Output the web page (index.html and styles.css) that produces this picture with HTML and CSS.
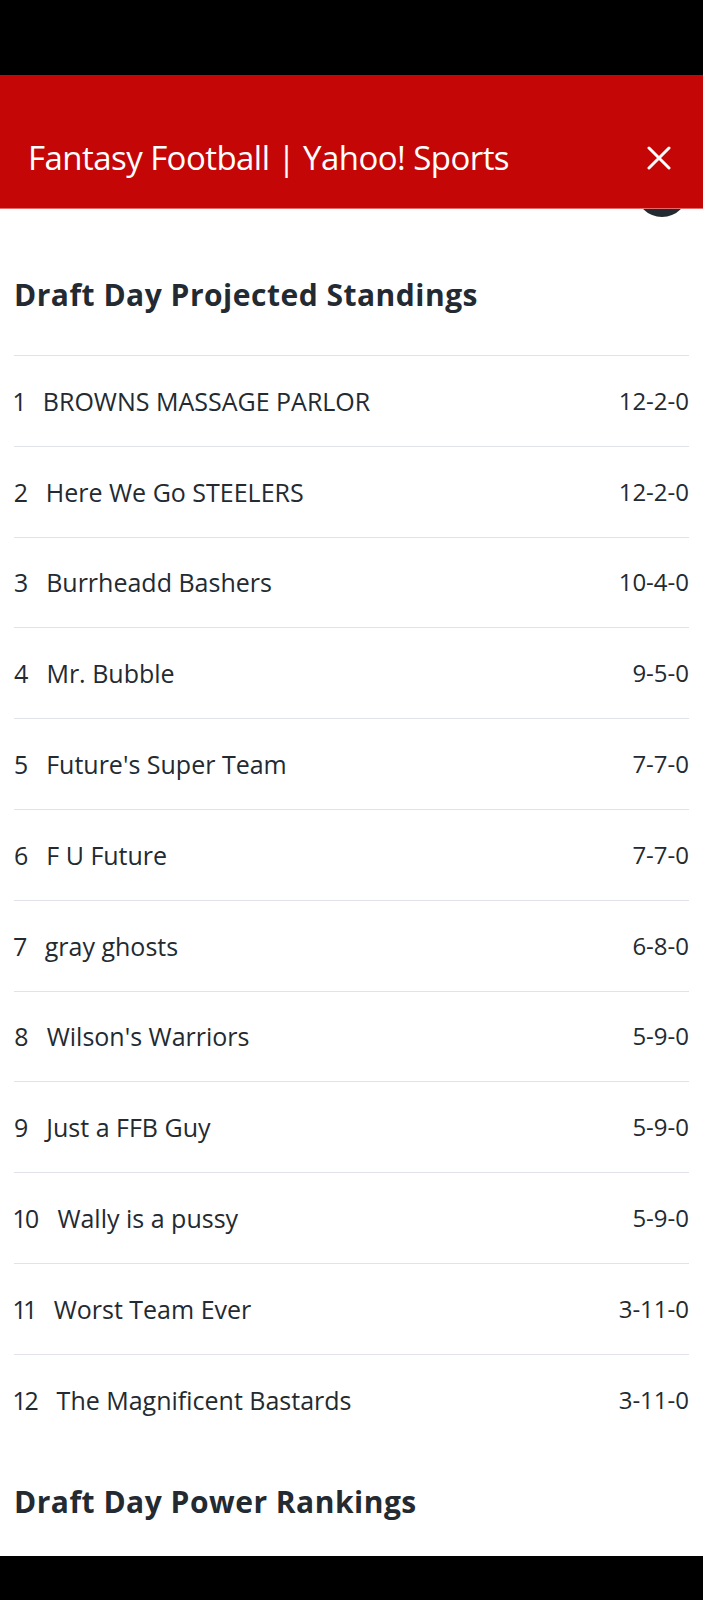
FILE: index.html
```html
<!DOCTYPE html>
<html lang="en">
<head>
<meta charset="utf-8">
<title>Fantasy Football | Yahoo! Sports</title>
<link rel="stylesheet" href="styles.css">
</head>
<body>
<div class="screen">
  <div class="status-bar"></div>
  <header class="app-header">
    <h1 class="app-title">Fantasy Football | Yahoo! Sports</h1>
    <button class="close-btn" aria-label="Close">
      <svg viewBox="0 0 24 24" width="24" height="24"><path d="M2 2 L22 22 M22 2 L2 22" stroke="#fff" stroke-width="3" stroke-linecap="round" fill="none"/></svg>
    </button>
  </header>
  <main class="content">
    <div class="fab"></div>
    <section class="section">
      <h2 class="section-title first">Draft Day Projected Standings</h2>
      <ul class="standings">
        <li class="row"><span class="team"><span class="rank">1</span>BROWNS MASSAGE PARLOR</span><span class="record">12-2-0</span></li>
        <li class="row"><span class="team"><span class="rank">2</span>Here We Go STEELERS</span><span class="record">12-2-0</span></li>
        <li class="row"><span class="team"><span class="rank">3</span>Burrheadd Bashers</span><span class="record">10-4-0</span></li>
        <li class="row"><span class="team"><span class="rank">4</span>Mr. Bubble</span><span class="record">9-5-0</span></li>
        <li class="row"><span class="team"><span class="rank">5</span>Future's Super Team</span><span class="record">7-7-0</span></li>
        <li class="row"><span class="team"><span class="rank">6</span>F U Future</span><span class="record">7-7-0</span></li>
        <li class="row"><span class="team"><span class="rank">7</span>gray ghosts</span><span class="record">6-8-0</span></li>
        <li class="row"><span class="team"><span class="rank">8</span>Wilson's Warriors</span><span class="record">5-9-0</span></li>
        <li class="row"><span class="team"><span class="rank">9</span>Just a FFB Guy</span><span class="record">5-9-0</span></li>
        <li class="row"><span class="team"><span class="rank">10</span>Wally is a pussy</span><span class="record">5-9-0</span></li>
        <li class="row"><span class="team"><span class="rank">11</span>Worst Team Ever</span><span class="record">3-11-0</span></li>
        <li class="row"><span class="team"><span class="rank">12</span>The Magnificent Bastards</span><span class="record">3-11-0</span></li>
      </ul>
    </section>
    <section class="section">
      <h2 class="section-title">Draft Day Power Rankings</h2>
    </section>
  </main>
  <div class="nav-bar"></div>
</div>
</body>
</html>
```

FILE: styles.css
```css
* { box-sizing: border-box; }
html, body { margin: 0; padding: 0; background: #000; }
body { font-family: "Open Sans", "Noto Sans", sans-serif; }

.screen {
  width: 703px;
  height: 1600px;
  display: flex;
  flex-direction: column;
  overflow: hidden;
  background: #fff;
}

.status-bar { height: 75px; background: #000; flex: none; }

.app-header {
  flex: none;
  height: 134px;
  background: #c50606;
  border-bottom: 1px solid #e66a6a;
  padding: 32px 32px 0 28px;
  display: flex;
  align-items: center;
  justify-content: space-between;
  position: relative;
  z-index: 2;
}

.app-title {
  margin: 0;
  color: #fff;
  font-weight: 400;
  font-size: 33px;
  letter-spacing: -0.55px;
  line-height: 46px;
  white-space: nowrap;
}

.close-btn {
  background: none;
  border: 0;
  padding: 0;
  width: 24px;
  height: 24px;
  display: flex;
}

.content {
  flex: 1;
  position: relative;
  overflow: hidden;
  background: #fff;
  padding: 0 14px;
}

.fab {
  position: absolute;
  right: 15px;
  top: -44px;
  width: 52px;
  height: 52px;
  border-radius: 50%;
  background: #232a31;
}

.section-title {
  margin: 40px 0 0;
  color: #232a31;
  font-weight: 700;
  font-size: 30px;
  letter-spacing: 0.5px;
  line-height: 34px;
}
.section-title.first { margin: 69px 0 43px; }

.standings { list-style: none; margin: 0; padding: 0; }

.row {
  height: 90.8px;
  border-top: 1px solid #e0e4e9;
  display: flex;
  align-items: center;
  justify-content: space-between;
  color: #232a31;
  font-size: 25px;
  line-height: 32px;
}

.team { display: flex; align-items: baseline; }
.rank { margin-right: 18px; font-variant-numeric: proportional-nums; }
.record { text-align: right; font-size: 24px; }

.nav-bar { height: 44px; background: #000; flex: none; }
```
